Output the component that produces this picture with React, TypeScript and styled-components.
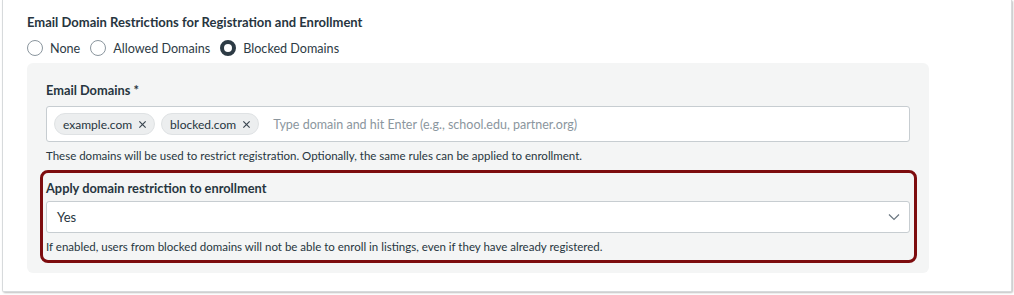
import styled, { createGlobalStyle } from "styled-components";

const GlobalStyle = createGlobalStyle`
  html, body {
    margin: 0;
    padding: 0;
    background: #ffffff;
  }
  body {
    font-family: Lato, "Noto Sans", sans-serif;
    color: #273540;
  }
`;

const Page = styled.div`
  padding: 0 2px 0 2px;
  height: 295px;
  box-sizing: border-box;
`;

const Card = styled.div`
  border: 1px solid #d7dadc;
  border-top: none;
  border-radius: 0 0 2px 2px;
  box-shadow: 1px 1px 2px rgba(0, 0, 0, 0.25);
  height: 292px;
  box-sizing: border-box;
  padding: 14px 0 0 24px;
  background: #fff;
`;

const Title = styled.div`
  font-size: 13px;
  font-weight: 700;
  line-height: 16px;
  color: #273540;
`;

const RadioRow = styled.div`
  display: flex;
  align-items: center;
  margin-top: 10px;
  gap: 10px;
`;

const RadioOption = styled.label`
  display: flex;
  align-items: center;
  gap: 7px;
  font-size: 12.6px;
  color: #2d3b45;
`;

const RadioDot = styled.span<{ checked?: boolean }>`
  width: 16px;
  height: 16px;
  border-radius: 50%;
  box-sizing: border-box;
  background: #fff;
  border: ${(p) => (p.checked ? "4px solid #2d3b45" : "1px solid #8b969e")};
`;

const Panel = styled.div`
  margin-top: 7px;
  width: 902px;
  height: 210px;
  box-sizing: border-box;
  background: #f4f5f5;
  border-radius: 6px;
  padding: 19px 19px 0 19px;
`;

const Label = styled.div`
  font-size: 12.8px;
  font-weight: 700;
  line-height: 16px;
  color: #273540;
`;

const TagInput = styled.div`
  margin-top: 8px;
  height: 36px;
  box-sizing: border-box;
  background: #fff;
  border: 1px solid #c7cdd1;
  border-radius: 3px;
  display: flex;
  align-items: center;
  padding: 0 7px;
  gap: 6px;
`;

const Chip = styled.span`
  display: inline-flex;
  align-items: center;
  gap: 6px;
  height: 22px;
  box-sizing: border-box;
  padding: 0 7px 0 8px;
  background: #eceeef;
  border: 1px solid #dfe2e4;
  border-radius: 11px;
  font-size: 12px;
  color: #273540;
`;

const ChipX = styled.svg`
  width: 9px;
  height: 9px;
`;

const Placeholder = styled.span`
  margin-left: 8px;
  font-size: 12.5px;
  color: #8b969e;
`;

const Help = styled.div`
  margin-top: 6px;
  font-size: 11.5px;
  line-height: 15px;
  color: #273540;
`;

const Highlight = styled.div`
  margin: 7px -7px 0 -6px;
  border: 3px solid #7d0c0e;
  border-radius: 8px;
  padding: 7px 4px 4px 3px;
  height: 93px;
  box-sizing: border-box;
`;

const Select = styled.div`
  margin-top: 5px;
  height: 32px;
  box-sizing: border-box;
  background: #fff;
  border: 1px solid #c7cdd1;
  border-radius: 3px;
  display: flex;
  align-items: center;
  justify-content: space-between;
  padding: 0 9px 0 10px;
  font-size: 13px;
  color: #273540;
`;

const Chevron = styled.svg`
  width: 12px;
  height: 8px;
`;

const XIcon = () => (
  <ChipX viewBox="0 0 10 10">
    <path d="M1.5 1.5 L8.5 8.5 M8.5 1.5 L1.5 8.5" stroke="#3a4650" strokeWidth="1.3" fill="none" />
  </ChipX>
);

const tags = ["example.com", "blocked.com"];

export default function App() {
  return (
    <>
      <GlobalStyle />
      <Page>
        <Card>
          <Title>Email Domain Restrictions for Registration and Enrollment</Title>
          <RadioRow>
            <RadioOption>
              <RadioDot />
              None
            </RadioOption>
            <RadioOption>
              <RadioDot />
              Allowed Domains
            </RadioOption>
            <RadioOption>
              <RadioDot checked />
              Blocked Domains
            </RadioOption>
          </RadioRow>
          <Panel>
            <Label>Email Domains *</Label>
            <TagInput>
              {tags.map((t) => (
                <Chip key={t}>
                  {t}
                  <XIcon />
                </Chip>
              ))}
              <Placeholder>Type domain and hit Enter (e.g., school.edu, partner.org)</Placeholder>
            </TagInput>
            <Help>
              These domains will be used to restrict registration. Optionally, the same rules can be applied to enrollment.
            </Help>
            <Highlight>
              <Label>Apply domain restriction to enrollment</Label>
              <Select>
                Yes
                <Chevron viewBox="0 0 12 8">
                  <path d="M1 1.5 L6 6.5 L11 1.5" stroke="#6b7780" strokeWidth="1.2" fill="none" />
                </Chevron>
              </Select>
              <Help>
                If enabled, users from blocked domains will not be able to enroll in listings, even if they have already registered.
              </Help>
            </Highlight>
          </Panel>
        </Card>
      </Page>
    </>
  );
}
